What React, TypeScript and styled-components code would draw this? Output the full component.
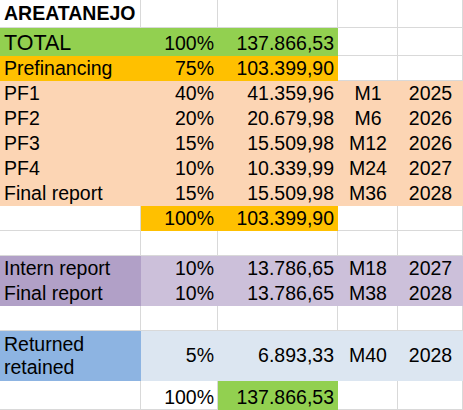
import React from "react";
import styled, { createGlobalStyle } from "styled-components";

const Global = createGlobalStyle`
  html, body { margin: 0; padding: 0; background: #ffffff; }
  body { font-family: "Liberation Sans", Arial, sans-serif; }
`;

const GRID = "#d9d9d9";

const C = {
  green: "#92d050",
  orange: "#ffc000",
  peach: "#fcd5b4",
  purpleDark: "#b1a0c7",
  purpleLight: "#ccc0da",
  blue: "#8db4e2",
  blueLight: "#dce6f1",
  white: "#ffffff",
};

const Sheet = styled.div`
  display: grid;
  grid-template-columns: 141px 77px 120px 60px 65px;
  grid-template-rows: 28px 28px repeat(11, 25px) 50px 29px;
  width: 463px;
  color: #000;
  font-family: "Liberation Sans", Arial, sans-serif;
  font-size: 19.5px;
`;

type Align = "left" | "right" | "center";
type VAlign = "end" | "center";

const Cell = styled.div<{
  $bg: string;
  $align: Align;
  $valign: VAlign;
  $bold?: boolean;
  $size?: number;
}>`
  box-sizing: border-box;
  display: flex;
  align-items: ${(p) => (p.$valign === "end" ? "flex-end" : "center")};
  justify-content: ${(p) =>
    p.$align === "left" ? "flex-start" : p.$align === "right" ? "flex-end" : "center"};
  text-align: ${(p) => p.$align};
  padding: 0 3px 0 4px;
  background: ${(p) => p.$bg};
  border-right: 1px solid ${(p) => (p.$bg === C.white ? GRID : p.$bg)};
  border-bottom: 1px solid ${(p) => (p.$bg === C.white ? GRID : p.$bg)};
  font-weight: ${(p) => (p.$bold ? 700 : 400)};
  font-size: ${(p) => p.$size ?? 19.5}px;
  line-height: 23px;
  white-space: pre-line;
  overflow: hidden;
`;

type CellDef = { t?: string; bg?: string; align?: Align; bold?: boolean; size?: number };
type RowDef = { valign?: VAlign; cells: CellDef[] };

const W = C.white;

const detail = (bgA: string, bgRest: string, name: string, pct: string, amt: string, m: string, y: string): CellDef[] => [
  { t: name, bg: bgA },
  { t: pct, bg: bgRest, align: "right" },
  { t: amt, bg: bgRest, align: "right" },
  { t: m, bg: bgRest, align: "center" },
  { t: y, bg: bgRest, align: "center" },
];

const blank: CellDef[] = [{}, {}, {}, {}, {}];

const rows: RowDef[] = [
  { valign: "center", cells: [{ t: "AREATANEJO", bold: true }, {}, {}, {}, {}] },
  {
    cells: [
      { t: "TOTAL", bg: C.green, size: 21.5 },
      { t: "100%", bg: C.green, align: "right" },
      { t: "137.866,53", bg: C.green, align: "right" },
      {},
      {},
    ],
  },
  {
    cells: [
      { t: "Prefinancing", bg: C.orange },
      { t: "75%", bg: C.orange, align: "right" },
      { t: "103.399,90", bg: C.orange, align: "right" },
      {},
      {},
    ],
  },
  { cells: detail(C.peach, C.peach, "PF1", "40%", "41.359,96", "M1", "2025") },
  { cells: detail(C.peach, C.peach, "PF2", "20%", "20.679,98", "M6", "2026") },
  { cells: detail(C.peach, C.peach, "PF3", "15%", "15.509,98", "M12", "2026") },
  { cells: detail(C.peach, C.peach, "PF4", "10%", "10.339,99", "M24", "2027") },
  { cells: detail(C.peach, C.peach, "Final report", "15%", "15.509,98", "M36", "2028") },
  {
    cells: [
      {},
      { t: "100%", bg: C.orange, align: "right" },
      { t: "103.399,90", bg: C.orange, align: "right" },
      {},
      {},
    ],
  },
  { cells: blank },
  { cells: detail(C.purpleDark, C.purpleLight, "Intern report", "10%", "13.786,65", "M18", "2027") },
  { cells: detail(C.purpleDark, C.purpleLight, "Final report", "10%", "13.786,65", "M38", "2028") },
  { cells: blank },
  { valign: "center", cells: detail(C.blue, C.blueLight, "Returned\nretained", "5%", "6.893,33", "M40", "2028") },
  {
    cells: [
      {},
      { t: "100%", align: "right" },
      { t: "137.866,53", bg: C.green, align: "right" },
      {},
      {},
    ],
  },
];

export default function App() {
  return (
    <>
      <Global />
      <Sheet>
        {rows.map((r, ri) =>
          r.cells.map((c, ci) => (
            <Cell
              key={`${ri}-${ci}`}
              $bg={c.bg ?? W}
              $align={c.align ?? "left"}
              $valign={r.valign ?? "end"}
              $bold={c.bold}
              $size={c.size}
            >
              {c.t ?? ""}
            </Cell>
          ))
        )}
      </Sheet>
    </>
  );
}
